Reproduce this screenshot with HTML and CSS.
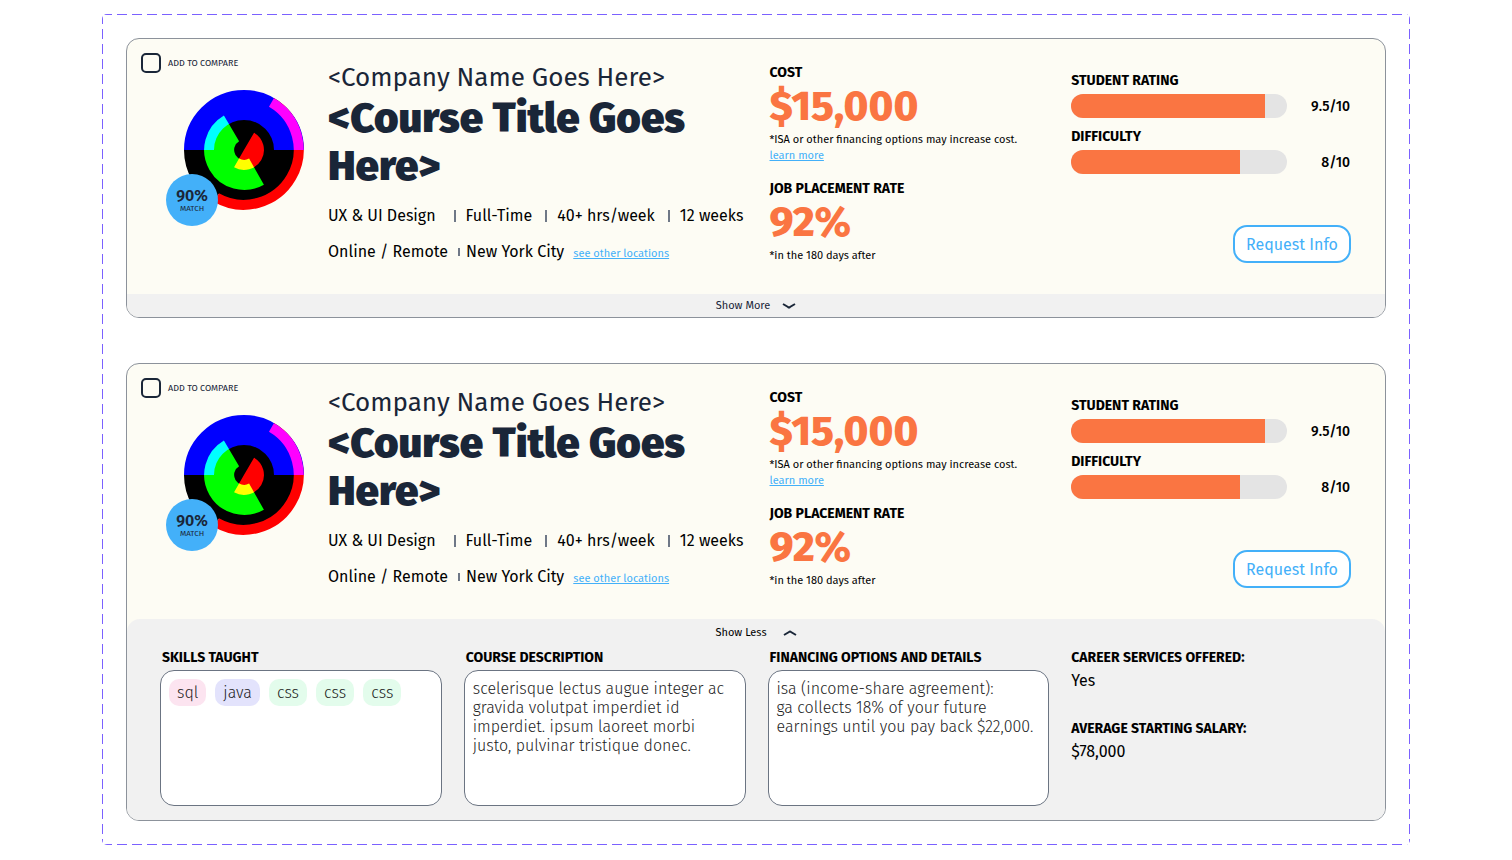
FILE: index.html
```
<!DOCTYPE html>
<html lang="en">
<head>
    <meta charset="UTF-8">
    <meta name="viewport" content="width=device-width, initial-scale=1.0">
    <title>Course Cards</title>
    <link rel="stylesheet" href="styles.css">
</head>
<body>

    <main class="frame">

        <!-- collapsed card -->
        <article class="card">
            <div class="card-top">
                <div class="intro">
                    <div class="score">
                        <label class="compare"><input type="checkbox"> ADD TO COMPARE</label>
                        <div class="logo">
                            <svg viewBox="-60 -60 120 120" fill="none">
                                <circle r="51" fill="#000"/>
                                <path class="base" d="M-50 0A50 50 0 0 0 -25 43.3" stroke="#000" stroke-width="20"/>
                                <path d="M-45 0A45 45 0 0 1 45 0" stroke="#00f" stroke-width="30"/>
                                <path d="M27.5 -47.63A55 55 0 0 1 -27.5 47.63" stroke="#f00" stroke-width="10"/>
                                <path d="M12.5 21.65A25 25 0 0 1 -12.5 -21.65" stroke="#0f0" stroke-width="30"/>
                                <path d="M5 -8.66A10 10 0 0 1 -5 8.66" stroke="#f00" stroke-width="20"/>
                            </svg>
                            <div class="match"><strong>90%</strong><span>MATCH</span></div>
                        </div>
                    </div>
                    <div class="info">
                        <p class="company">&lt;Company Name Goes Here&gt;</p>
                        <h2>&lt;Course Title Goes Here&gt;</h2>
                        <ul class="meta">
                            <li>UX &amp; UI Design</li>
                            <li>Full-Time</li>
                            <li>40+ hrs/week</li>
                            <li>12 weeks</li>
                        </ul>
                        <ul class="meta places">
                            <li>Online / Remote</li>
                            <li>New York City <a href="#">see other locations</a></li>
                        </ul>
                    </div>
                </div>
                <div class="numbers">
                    <h3>COST</h3>
                    <p class="big">$15,000</p>
                    <p class="note">*ISA or other financing options may increase cost.<br><a href="#">learn more</a></p>
                    <h3>JOB PLACEMENT RATE</h3>
                    <p class="big">92%</p>
                    <p class="note">*in the 180 days after</p>
                </div>
                <div class="ratings">
                    <h3>STUDENT RATING</h3>
                    <div class="rating">
                        <div class="bar"><div class="fill" style="width: 90%"></div></div>
                        <span>9.5/10</span>
                    </div>
                    <h3>DIFFICULTY</h3>
                    <div class="rating">
                        <div class="bar"><div class="fill" style="width: 78%"></div></div>
                        <span>8/10</span>
                    </div>
                    <button class="request" type="button">Request Info</button>
                </div>
            </div>
            <div class="card-more">
                <button class="toggle" type="button">Show More
                    <svg width="14" height="8" viewBox="0 0 14 8"><path d="M1 2L6 5Q7 6 8 5L13 2"/></svg>
                </button>
            </div>
        </article>

        <!-- expanded card -->
        <article class="card">
            <div class="card-top">
                <div class="intro">
                    <div class="score">
                        <label class="compare"><input type="checkbox"> ADD TO COMPARE</label>
                        <div class="logo">
                            <svg viewBox="-60 -60 120 120" fill="none">
                                <circle r="51" fill="#000"/>
                                <path class="base" d="M-50 0A50 50 0 0 0 -25 43.3" stroke="#000" stroke-width="20"/>
                                <path d="M-45 0A45 45 0 0 1 45 0" stroke="#00f" stroke-width="30"/>
                                <path d="M27.5 -47.63A55 55 0 0 1 -27.5 47.63" stroke="#f00" stroke-width="10"/>
                                <path d="M12.5 21.65A25 25 0 0 1 -12.5 -21.65" stroke="#0f0" stroke-width="30"/>
                                <path d="M5 -8.66A10 10 0 0 1 -5 8.66" stroke="#f00" stroke-width="20"/>
                            </svg>
                            <div class="match"><strong>90%</strong><span>MATCH</span></div>
                        </div>
                    </div>
                    <div class="info">
                        <p class="company">&lt;Company Name Goes Here&gt;</p>
                        <h2>&lt;Course Title Goes Here&gt;</h2>
                        <ul class="meta">
                            <li>UX &amp; UI Design</li>
                            <li>Full-Time</li>
                            <li>40+ hrs/week</li>
                            <li>12 weeks</li>
                        </ul>
                        <ul class="meta places">
                            <li>Online / Remote</li>
                            <li>New York City <a href="#">see other locations</a></li>
                        </ul>
                    </div>
                </div>
                <div class="numbers">
                    <h3>COST</h3>
                    <p class="big">$15,000</p>
                    <p class="note">*ISA or other financing options may increase cost.<br><a href="#">learn more</a></p>
                    <h3>JOB PLACEMENT RATE</h3>
                    <p class="big">92%</p>
                    <p class="note">*in the 180 days after</p>
                </div>
                <div class="ratings">
                    <h3>STUDENT RATING</h3>
                    <div class="rating">
                        <div class="bar"><div class="fill" style="width: 90%"></div></div>
                        <span>9.5/10</span>
                    </div>
                    <h3>DIFFICULTY</h3>
                    <div class="rating">
                        <div class="bar"><div class="fill" style="width: 78%"></div></div>
                        <span>8/10</span>
                    </div>
                    <button class="request" type="button">Request Info</button>
                </div>
            </div>
            <div class="card-more open">
                <button class="toggle" type="button">Show Less
                    <svg width="14" height="8" viewBox="0 0 14 8"><path d="M1 6L6 3Q7 2 8 3L13 6"/></svg>
                </button>
                <div class="details">
                    <section>
                        <h3>SKILLS TAUGHT</h3>
                        <div class="box tags">
                            <span class="tag pink">sql</span>
                            <span class="tag violet">java</span>
                            <span class="tag green">css</span>
                            <span class="tag green">css</span>
                            <span class="tag green">css</span>
                        </div>
                    </section>
                    <section>
                        <h3>COURSE DESCRIPTION</h3>
                        <p class="box">scelerisque lectus augue integer ac gravida volutpat imperdiet id imperdiet. ipsum laoreet morbi justo, pulvinar tristique donec.</p>
                    </section>
                    <section>
                        <h3>FINANCING OPTIONS AND DETAILS</h3>
                        <p class="box">isa (income-share agreement):<br>ga collects 18% of your future earnings until you pay back $22,000.</p>
                    </section>
                    <section class="facts">
                        <h3>CAREER SERVICES OFFERED:</h3>
                        <p>Yes</p>
                        <h3>AVERAGE STARTING SALARY:</h3>
                        <p>$78,000</p>
                    </section>
                </div>
            </div>
        </article>

    </main>

</body>
</html>
```
FILE: styles.css
```
* {
    margin: 0;
    padding: 0;
    box-sizing: border-box;
}

body {
    padding: 14px 102px;
    background: #fff;
    color: #000;
    font-family: "Fira Sans", "Noto Sans", sans-serif;
    font-size: 16px;
}

button {
    font-family: inherit;
    cursor: pointer;
}

a {
    color: #43b0f9;
    font-size: 11px;
}

/* long dashes on all four sides */
.frame {
    display: flex;
    flex-direction: column;
    gap: 45px;
    padding: 24px;
    border-radius: 5px;
    background:
        repeating-linear-gradient(90deg, #7b61ff 0 10px, transparent 10px 15px) top / 100% 1px no-repeat,
        repeating-linear-gradient(90deg, #7b61ff 0 10px, transparent 10px 15px) bottom / 100% 1px no-repeat,
        repeating-linear-gradient(#7b61ff 0 10px, transparent 10px 15px) left / 1px 100% no-repeat,
        repeating-linear-gradient(#7b61ff 0 10px, transparent 10px 15px) right / 1px 100% no-repeat;
}

.card {
    border: 1px solid #8c929b;
    border-radius: 13px;
    background: #fdfcf4;
    overflow: hidden;
}

.card-top,
.details {
    display: grid;
    grid-template-columns: repeat(4, minmax(0, 1fr));
    column-gap: 22px;
    padding: 0 32px 0 33px;
}

.card-top {
    min-height: 255px;
    padding-top: 14px;
}

h3 {
    font-size: 14px;
    font-weight: 700;
    line-height: 20px;
}

/* logo and match score */
.intro {
    grid-column: span 2;
    display: flex;
}

.score {
    flex: none;
    width: 187px;
    margin-left: -19px;
}

.compare {
    display: flex;
    align-items: center;
    gap: 7px;
    color: #1a2638;
    font-size: 9px;
    line-height: 20px;
}

.compare input {
    appearance: none;
    width: 20px;
    height: 20px;
    border: 2px solid #1a2638;
    border-radius: 5px;
}

.compare input:checked {
    background: #43b0f9;
}

.logo {
    position: relative;
    width: 120px;
    margin: 17px 0 0 43px;
}

.logo svg {
    display: block;
    width: 120px;
    height: 120px;
    isolation: isolate;
}

.logo path {
    mix-blend-mode: screen;
}

.logo .base {
    mix-blend-mode: normal;
}

.match {
    position: absolute;
    left: -18px;
    bottom: -16px;
    display: flex;
    flex-direction: column;
    align-items: center;
    justify-content: center;
    width: 52px;
    height: 52px;
    border-radius: 50%;
    background: #43b0f9;
    color: #1a2638;
    font-size: 8px;
    line-height: 9px;
}

.match strong {
    font-size: 16px;
    font-weight: 600;
    line-height: 16px;
}

/* course info */
.info {
    flex: 1;
    min-width: 0;
    padding-top: 9px;
    color: #1a2638;
}

.company {
    font-size: 26px;
    line-height: 32px;
}

h2 {
    font-size: 42px;
    font-weight: 900;
    line-height: 48px;
}

.meta {
    display: flex;
    gap: 13px;
    margin-top: 16px;
    color: #000;
    line-height: 20px;
    list-style: none;
    white-space: nowrap;
}

.meta li {
    display: flex;
    align-items: center;
}

.meta li:first-child {
    padding-right: 5px;
}

.meta li + li::before {
    content: "";
    width: 2px;
    height: 12px;
    margin-right: 10px;
    background: #6f7887;
}

.meta a {
    margin: 4px 0 0 9px;
    line-height: 16px;
}

.places {
    gap: 5px;
}

.places li + li::before {
    height: 8px;
    margin-right: 6px;
}

/* cost and placement */
.numbers {
    padding: 10px 0 0 2px;
}

.big {
    color: #fa7542;
    font-size: 42px;
    font-weight: 800;
    line-height: 46px;
}

.note {
    margin-top: 3px;
    font-size: 11px;
    line-height: 16px;
    white-space: nowrap;
}

.note + h3 {
    margin-top: 15px;
}

/* ratings */
.ratings {
    padding: 18px 2px 0 0;
}

.rating {
    display: flex;
    align-items: center;
    margin: 3px 0 9px;
}

.bar {
    flex: 1;
    height: 24px;
    border-radius: 12px;
    background: #e4e4e4;
    overflow: hidden;
}

.fill {
    height: 100%;
    background: #fa7542;
}

.rating span {
    width: 64px;
    padding-right: 1px;
    font-size: 14px;
    font-weight: 500;
    text-align: right;
}

.request {
    display: block;
    width: 118px;
    height: 38px;
    margin: 51px 0 0 auto;
    border: 2px solid #43b0f9;
    border-radius: 14px;
    background: #fff;
    color: #43b0f9;
    font-size: 16px;
}

/* bottom part of the card */
.card-more {
    background: #f1f1f1;
}

.card-more.open {
    padding-bottom: 14px;
    border-radius: 13px 13px 0 0;
}

.toggle {
    display: flex;
    align-items: center;
    gap: 12px;
    margin: 0 auto;
    padding-top: 1px;
    border: none;
    background: none;
    color: #1a2638;
    font-size: 11px;
    line-height: 22px;
}

.open .toggle {
    padding-top: 3px;
    gap: 16px;
    color: #000;
}

.toggle svg {
    fill: none;
    stroke: #1a2638;
    stroke-width: 2;
}

.details h3 {
    margin: 4px 0 2px 2px;
}

.box {
    min-height: 136px;
    padding: 8px;
    border: 1px solid #6b7482;
    border-radius: 14px;
    background: #fff;
    color: #1c1c1c;
    font-weight: 300;
    line-height: 19px;
}

.tags {
    display: flex;
    flex-wrap: wrap;
    align-content: flex-start;
    gap: 9px;
}

.tag {
    padding: 4px 8px;
    border-radius: 10px;
}

.pink {
    background: #fce4f0;
}

.violet {
    background: #e3e3fc;
}

.green {
    background: #e3fcec;
}

.details .facts h3 {
    margin-left: 0;
    margin-bottom: 0;
}

.facts p {
    margin-bottom: 26px;
    line-height: 25px;
}
```
